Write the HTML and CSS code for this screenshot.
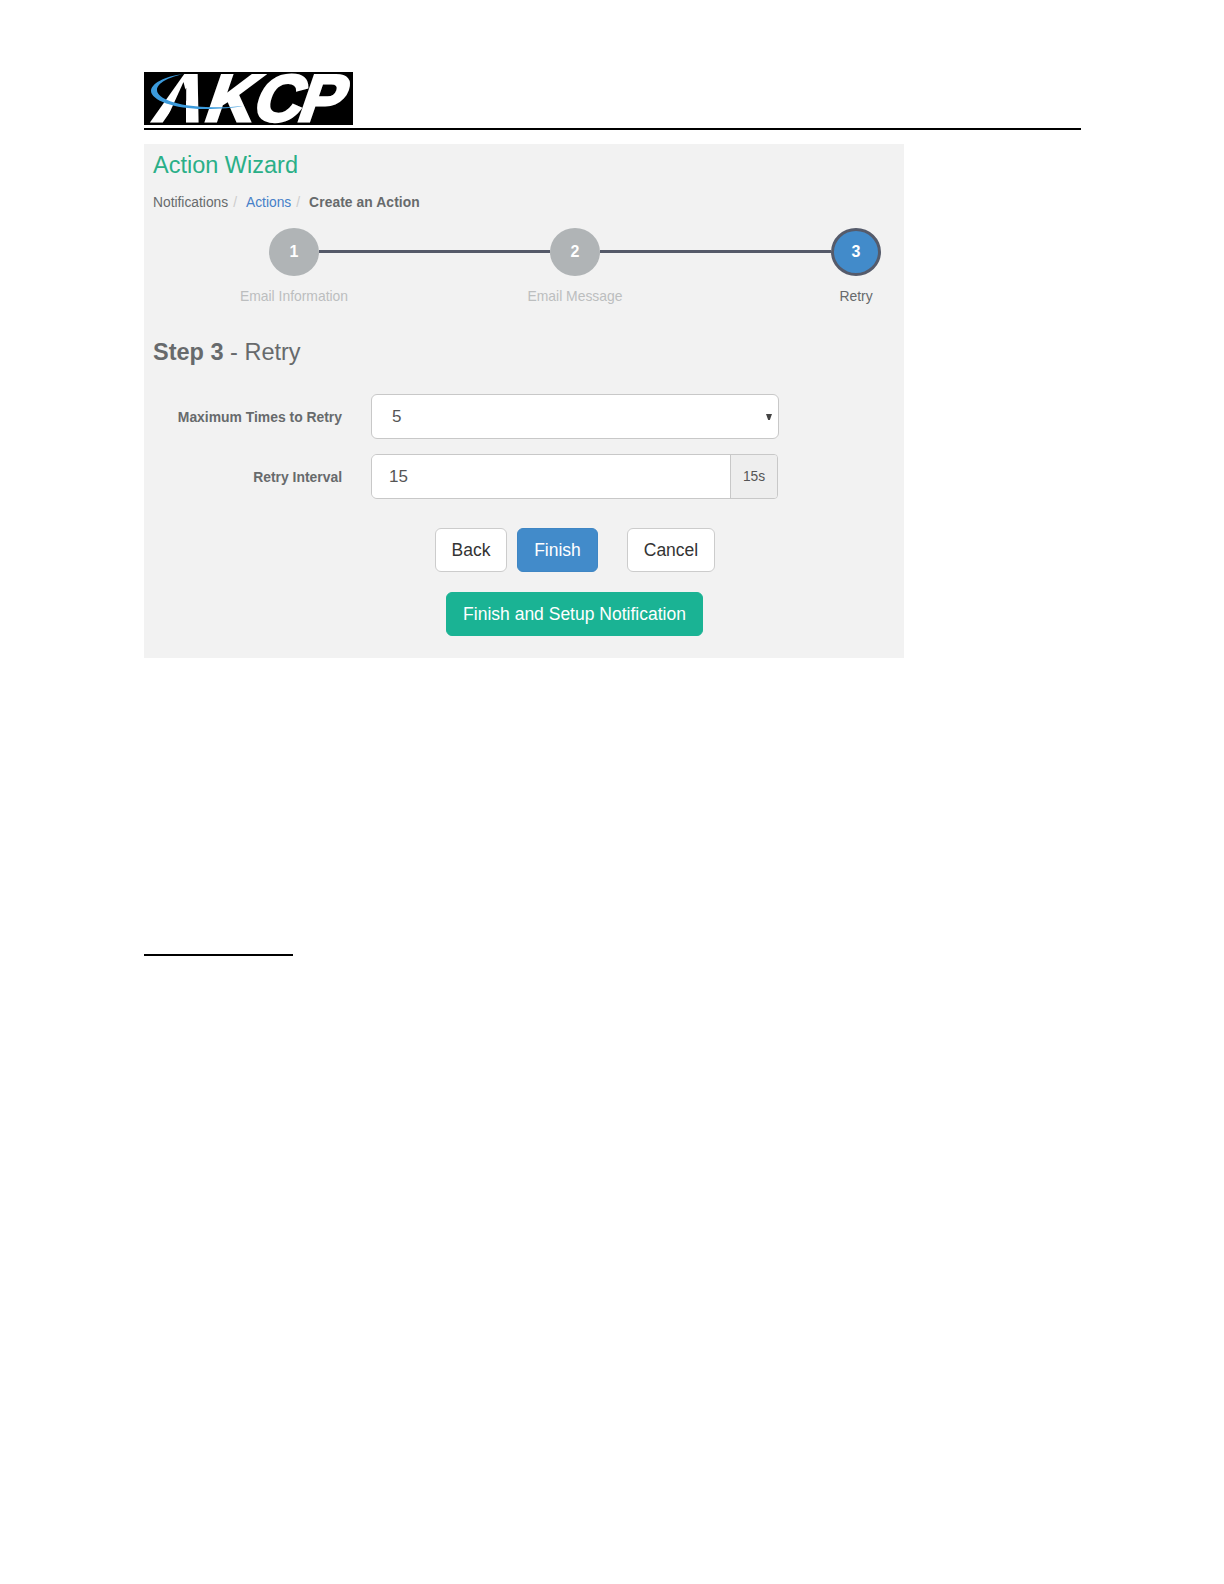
FILE: index.html
```html
<!DOCTYPE html>
<html lang="en">
<head>
    <meta charset="UTF-8">
    <meta name="viewport" content="width=device-width, initial-scale=1.0">
    <title>Action Wizard</title>
    <link rel="stylesheet" href="styles.css">
</head>
<body>
    <div class="page">
        <header class="page-header">
            <svg class="logo" width="209" height="53" viewBox="0 0 209 53">
                <rect width="209" height="53" fill="#000"/>
                <g transform="translate(0 49) skewX(-19)">
                    <text class="logo-text" x="7 58 106 151" y="0">AKCP</text>
                </g>
                <!-- open counter of the A -->
                <path d="M39.500 10 L42 20 L42 53 L20 53 Z" fill="#000"/>
                <path d="M40 2 C20 4 7 12 7 19 C7 28 30 37 60 37 C76 37 90 36 99 34 C86 35.500 74 35.500 62 35 C34 34 13 27 13 18 C13 11 25 5 40 2 Z" fill="#3c9bdc"/>
            </svg>
        </header>

        <div class="panel">
            <h1>Action Wizard</h1>
            <div class="breadcrumb">
                <span>Notifications</span>
                <span class="slash">/</span>
                <a>Actions</a>
                <span class="slash">/</span>
                <strong>Create an Action</strong>
            </div>

            <div class="steps">
                <div class="step">
                    <div class="circle">1</div>
                    <div class="step-label">Email Information</div>
                </div>
                <div class="line"></div>
                <div class="step">
                    <div class="circle">2</div>
                    <div class="step-label">Email Message</div>
                </div>
                <div class="line"></div>
                <div class="step active">
                    <div class="circle">3</div>
                    <div class="step-label">Retry</div>
                </div>
            </div>

            <h2><strong>Step 3</strong> - Retry</h2>

            <form>
                <div class="form-row">
                    <label>Maximum Times to Retry</label>
                    <div class="select">
                        <span>5</span>
                        <svg width="6" height="6" viewBox="0 0 6 6"><path d="M0 0 H6 L3.800 6 H2.200 Z" fill="#444"/></svg>
                    </div>
                </div>
                <div class="form-row">
                    <label>Retry Interval</label>
                    <div class="input-group">
                        <div class="input">15</div>
                        <div class="addon">15s</div>
                    </div>
                </div>
                <div class="buttons">
                    <button type="button" class="btn btn-back">Back</button>
                    <button type="button" class="btn btn-primary">Finish</button>
                    <button type="button" class="btn btn-cancel">Cancel</button>
                </div>
                <div class="buttons-bottom">
                    <button type="button" class="btn btn-success">Finish and Setup Notification</button>
                </div>
            </form>
        </div>

        <div class="footnote-line"></div>
    </div>
</body>
</html>
```
FILE: styles.css
```css
* {
    box-sizing: border-box;
}

body {
    margin: 0;
    background: #fff;
    color: #676a6c;
    font-family: "Liberation Sans", Arial, sans-serif;
}

.page {
    width: 937px;
    min-height: 1584px;
    margin-left: 144px;
    padding-top: 72px;
}

.page-header {
    height: 58px;
    border-bottom: 2px solid #000;
}

.logo {
    display: block;
    overflow: visible;
}

.logo-text {
    font-size: 66px;
    font-weight: bold;
    fill: #fff;
    stroke: #fff;
    stroke-width: 3px;
}

/* Wizard panel */
.panel {
    width: 760px;
    height: 514px;
    margin-top: 14px;
    padding: 6px 23px 0 9px;
    background: #f2f2f2;
}

h1,
h2 {
    margin: 0;
    font-size: 23.5px;
    font-weight: normal;
    line-height: 30px;
}

h1 {
    color: #2aaf88;
}

.breadcrumb {
    display: flex;
    margin-top: 14px;
    font-size: 13.8px;
    line-height: 18px;
}

.breadcrumb a {
    color: #4680c8;
}

.breadcrumb strong {
    letter-spacing: 0.1px;
}

.slash {
    margin: 0 9px 0 5px;
    color: #ccc;
}

/* Steps */
.steps {
    display: flex;
    margin-top: 16px;
    padding-left: 116px;
}

.step {
    display: flex;
    flex-direction: column;
    align-items: center;
    width: 50px;
    color: #bcbebf;
}

.circle {
    width: 50px;
    height: 48px;
    border-radius: 50%;
    background: #b0b4b6;
    color: #fff;
    font-size: 16px;
    font-weight: bold;
    line-height: 47px;
    text-align: center;
}

.step-label {
    margin-top: 11px;
    font-size: 13.9px;
    line-height: 18px;
    white-space: nowrap;
}

.step.active {
    color: #676a6c;
}

.step.active .circle {
    border: 3px solid #555b6b;
    background: #428bca;
    line-height: 41px;
}

.line {
    flex: 1;
    height: 3px;
    margin-top: 22px;
    background: #555a69;
}

h2 {
    margin-top: 32px;
}

/* Form */
.form-row {
    display: flex;
    align-items: center;
    height: 45px;
    margin-bottom: 15px;
}

form {
    padding-top: 27px;
}

label {
    width: 189px;
    margin-right: 29px;
    font-size: 13.9px;
    font-weight: bold;
    text-align: right;
    padding-top: 1px;
}

.select {
    display: flex;
    justify-content: space-between;
    align-items: center;
    width: 408px;
    height: 45px;
    padding: 0 6px 0 20px;
    border: 1px solid #c8c8c8;
    border-radius: 6px;
    background: #fff;
    color: #555;
    font-size: 17px;
}

.input-group {
    display: flex;
    width: 407px;
    height: 45px;
    border: 1px solid #c8c8c8;
    border-radius: 6px 4px 4px 6px;
    overflow: hidden;
    color: #555;
    line-height: 43px;
}

.input {
    flex: 1;
    padding-left: 17px;
    background: #fff;
    font-size: 17px;
}

.addon {
    width: 47px;
    border-left: 1px solid #c8c8c8;
    background: #eee;
    font-size: 13.8px;
    text-align: center;
}

.buttons {
    display: flex;
    margin-top: 29px;
    padding-left: 282px;
}

.btn {
    height: 44px;
    padding: 0;
    border: 1px solid #ccc;
    border-radius: 6px;
    background: #fff;
    color: #333;
    font-family: inherit;
    font-size: 17.5px;
}

.btn-back {
    width: 72px;
}

.btn-primary {
    width: 81px;
    margin: 0 29px 0 10px;
    border-color: #3f86c4;
    background: #428bca;
    color: #fff;
}

.btn-cancel {
    width: 88px;
}

.buttons-bottom {
    margin-top: 20px;
    padding-left: 293px;
}

.btn-success {
    width: 257px;
    border-color: #1ab394;
    background: #1ab394;
    color: #fff;
}

/* Separator above the footnotes */
.footnote-line {
    width: 149px;
    height: 2px;
    margin-top: 296px;
    background: #000;
}
```
